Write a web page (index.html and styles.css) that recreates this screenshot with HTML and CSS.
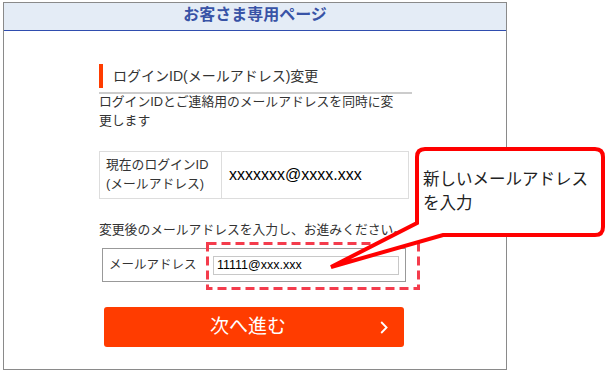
FILE: index.html
```html
<!DOCTYPE html>
<html lang="ja">
<head>
<meta charset="utf-8">
<title>お客さま専用ページ</title>
<link rel="stylesheet" href="styles.css">
</head>
<body>
<div class="frame">
  <div class="header">お客さま専用ページ</div>
  <div class="main">
    <div class="heading"><span class="heading-bar"></span><span class="heading-text">ログインID(メールアドレス)変更</span></div>
    <p class="desc">ログインIDとご連絡用のメールアドレスを同時に変更します</p>
    <div class="current">
      <div class="current-label">現在のログインID<br>(メールアドレス)</div>
      <div class="current-value">xxxxxxx@xxxx.xxx</div>
    </div>
    <p class="lead">変更後のメールアドレスを入力し、お進みください。</p>
    <div class="newmail">
      <div class="newmail-label">メールアドレス</div>
      <input class="newmail-input" type="text" value="11111@xxx.xxx">
    </div>
    <div class="next-btn">
      <span class="next-text">次へ進む</span>
      <svg class="next-chev" width="8" height="13" viewBox="0 0 8 13"><polyline points="1.2,1 6.6,6.5 1.2,12" fill="none" stroke="#fff" stroke-width="1.8"/></svg>
    </div>
  </div>
</div>

<svg class="dash-box" width="214" height="48" viewBox="0 0 214 48"><rect x="1.5" y="1.5" width="211" height="45" fill="none" stroke="#f43c4c" stroke-width="3" stroke-dasharray="9 5"/></svg>

<svg class="callout" width="608" height="374" viewBox="0 0 608 374"><path d="M425 149 H595 Q603 149 603 157 V227 Q603 235 595 235 H443 L331 267 L417 223 V157 Q417 149 425 149 Z" fill="#fff" stroke="#ff0000" stroke-width="4" stroke-linejoin="miter"/></svg>
<div class="callout-text">新しいメールアドレス<br>を入力</div>
</body>
</html>
```
FILE: styles.css
```css
* { box-sizing: border-box; }
html, body { margin: 0; padding: 0; }
body {
  position: relative;
  width: 608px;
  height: 374px;
  overflow: hidden;
  background: #fff;
  font-family: "Liberation Sans", "Noto Sans CJK JP", sans-serif;
  color: #333;
}
.frame {
  margin: 2px 0 0 3px;
  width: 504px;
  height: 368px;
  border: 1px solid #8a8a8a;
}
.header {
  height: 28px;
  background: #e4ecf6;
  border-bottom: 1px solid #2f4daf;
  text-align: center;
  font-size: 16px;
  font-weight: bold;
  line-height: 23px;
  color: #3853a6;
}
.main {
  padding: 33px 0 0 95px;
}
.heading {
  width: 313px;
  display: flex;
  align-items: center;
  padding-bottom: 4px;
  border-bottom: 2px solid #cccccc;
}
.heading-bar {
  width: 4px;
  height: 24px;
  background: #ff3c00;
}
.heading-text {
  margin-left: 10px;
  font-size: 14px;
  line-height: 24px;
  color: #333;
}
.desc {
  margin: -2px 0 0 0;
  width: 302px;
  font-size: 12.8px;
  line-height: 19px;
}
.current {
  margin-top: 21px;
  width: 310px;
  display: flex;
  border: 1px solid #dddddd;
}
.current-label {
  width: 122px;
  padding: 3px 0 5px 6px;
  border-right: 1px solid #dddddd;
  font-size: 12.8px;
  line-height: 19px;
}
.current-value {
  align-self: center;
  padding-left: 7px;
  font-size: 16px;
  color: #000;
}
.lead {
  margin: 21px 0 0 0;
  width: 313px;
  font-size: 12.8px;
  line-height: 19px;
  white-space: nowrap;
}
.newmail {
  margin: 9px 0 0 3px;
  width: 304px;
  height: 34px;
  display: flex;
  align-items: center;
  border: 1px solid #999;
}
.newmail-label {
  width: 110px;
  padding-left: 6px;
  font-size: 12.5px;
  line-height: 19px;
}
.newmail-input {
  width: 186px;
  height: 19px;
  margin: 0;
  padding: 0 3px;
  border: 1px solid #c8c8c8;
  border-radius: 0;
  font-family: "Liberation Sans", sans-serif;
  font-size: 12.5px;
  color: #000;
  background: #fff;
  outline: none;
}
.next-btn {
  margin: 25px 0 0 5px;
  width: 300px;
  height: 40px;
  display: flex;
  align-items: center;
  padding: 0 16px;
  background: #ff3c00;
  border-radius: 3px;
}
.next-text {
  flex: 1;
  text-align: center;
  font-size: 19px;
  line-height: 40px;
  color: #fff;
}
.next-chev {
  margin-left: 4px;
  display: block;
}
.dash-box {
  position: absolute;
  left: 206px;
  top: 242px;
}
.callout {
  position: absolute;
  left: 0;
  top: 0;
}
.callout-text {
  position: absolute;
  left: 423px;
  top: 167px;
  font-size: 16.5px;
  line-height: 24px;
  color: #222;
  white-space: nowrap;
}
```
